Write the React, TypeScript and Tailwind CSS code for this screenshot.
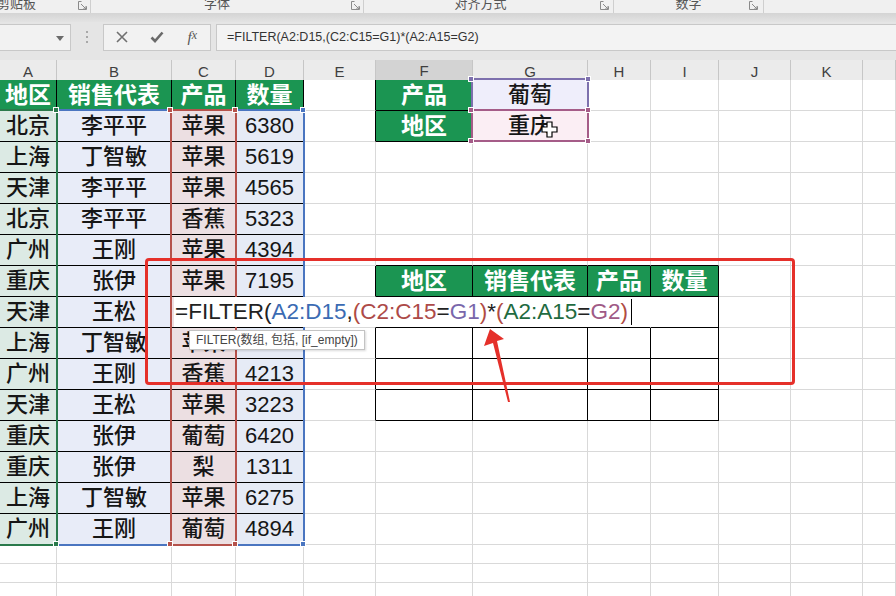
import clsx from "clsx";

const COLS = ["A", "B", "C", "D", "E", "F", "G", "H", "I", "J", "K", ""];
const GRID_COLS = "grid-cols-[57px_115px_64px_68px_72px_97px_115px_63px_68px_72px_72px_33px]";

const data = [
  ["地区", "销售代表", "产品", "数量"],
  ["北京", "李平平", "苹果", "6380"],
  ["上海", "丁智敏", "苹果", "5619"],
  ["天津", "李平平", "苹果", "4565"],
  ["北京", "李平平", "香蕉", "5323"],
  ["广州", "王刚", "苹果", "4394"],
  ["重庆", "张伊", "苹果", "7195"],
  ["天津", "王松", "苹果", "5962"],
  ["上海", "丁智敏", "苹果", "2427"],
  ["广州", "王刚", "香蕉", "4213"],
  ["天津", "王松", "苹果", "3223"],
  ["重庆", "张伊", "葡萄", "6420"],
  ["重庆", "张伊", "梨", "1311"],
  ["上海", "丁智敏", "苹果", "6275"],
  ["广州", "王刚", "葡萄", "4894"],
];

const outHead = ["地区", "销售代表", "产品", "数量"];

const TONES = {
  head: "bg-[#1b9552] text-white font-bold text-[23px]",
  a: "bg-[#dceae4] text-[#161616] font-medium text-[22px]",
  b: "bg-[#e8ecf8] text-[#161616] font-medium text-[22px]",
  c: "bg-[#ecdfe2] text-[#161616] font-medium text-[22px]",
  d: "bg-[#e6ebf6] text-[#161616] text-[22px]",
  g1: "bg-[#efeefb] text-[#161616] font-medium text-[22px]",
  g2: "bg-[#fbeef4] text-[#161616] font-medium text-[22px]",
  plain: "bg-white",
};

type Tone = keyof typeof TONES;

function cellFor(r: number, c: number) {
  let text = "";
  let tone: Tone = "plain";
  let rb = false;
  let bb = false;
  let noRight = false;

  if (r < 15 && c < 4) {
    text = data[r][c];
    tone = r === 0 ? "head" : (["a", "b", "c", "d"] as const)[c];
    rb = bb = true;
  }
  if (r < 2 && c === 5) {
    text = r === 0 ? "产品" : "地区";
    tone = "head";
    rb = bb = true;
  }
  if (r < 2 && c === 6) {
    text = r === 0 ? "葡萄" : "重庆";
    tone = r === 0 ? "g1" : "g2";
    rb = bb = true;
  }
  if (r < 2 && c === 4) rb = true;
  if (r === 6 && c >= 5 && c <= 8) {
    text = outHead[c - 5];
    tone = "head";
    rb = bb = true;
  }
  if (r >= 7 && r <= 10 && c >= 5 && c <= 8) rb = bb = true;
  if (r >= 6 && r <= 10 && c === 4) rb = true;
  if (r === 5 && c >= 5 && c <= 8) bb = true;
  if (r === 7 && c === 7) noRight = true;

  return { text, tone, rb, bb, noRight };
}

function Ribbon() {
  return (
    <div className="flex h-[13px] overflow-hidden bg-[#f0f0f0] text-[13px] text-[#555]">
      <div className="relative flex w-[91px] border-r border-[#cfcfcf]">
        <span className="-ml-[3px] -mt-[6px]">剪贴板</span>
        <Launcher className="absolute right-[3px] top-[1px]" />
      </div>
      <div className="relative flex w-[273px] justify-center border-r border-[#cfcfcf]">
        <span className="-ml-[20px] -mt-[6px]">字体</span>
        <Launcher className="absolute right-[3px] top-[1px]" />
      </div>
      <div className="relative flex w-[250px] justify-center border-r border-[#cfcfcf]">
        <span className="-ml-[16px] -mt-[6px]">对齐方式</span>
        <Launcher className="absolute right-[4px] top-[1px]" />
      </div>
      <div className="relative flex w-[150px] justify-center border-r border-[#cfcfcf]">
        <span className="-mt-[6px]">数字</span>
        <Launcher className="absolute right-[5px] top-[1px]" />
      </div>
    </div>
  );
}

function Launcher({ className }: { className?: string }) {
  return (
    <svg className={className} width="9" height="9" viewBox="0 0 9 9" fill="none" stroke="#8a8a8a" strokeWidth="1">
      <path d="M0.5 0.5h3M0.5 0.5v8h8v-3" />
      <path d="M3 3l5 5M8 5v3h-3" />
    </svg>
  );
}

function FormulaBar() {
  return (
    <div className="bg-[#e5e5e5]">
      <div className="h-[9px] bg-gradient-to-b from-[#d4d4d4] to-[#e3e3e3]" />
      <div className="flex h-[30px] items-center">
        <div className="relative h-[27px] w-[71px] border border-l-0 border-[#c8c8c8] bg-[#f2f2f2]">
          <svg className="absolute right-[6px] top-[11px]" width="8" height="5" viewBox="0 0 8 5">
            <path d="M0 0h8L4 5z" fill="#6b6b6b" />
          </svg>
        </div>
        <div className="flex w-[32px] flex-col items-center gap-[3px]">
          <span className="h-[2px] w-[2px] bg-[#a8a8a8]" />
          <span className="h-[2px] w-[2px] bg-[#a8a8a8]" />
          <span className="h-[2px] w-[2px] bg-[#a8a8a8]" />
        </div>
        <div className="flex h-[27px] w-[108px] items-center border border-[#c8c8c8] bg-[#f2f2f2]">
          <div className="flex w-[36px] justify-center">
            <svg width="12" height="12" viewBox="0 0 12 12" stroke="#707070" strokeWidth="1.6">
              <path d="M1 1l10 10M11 1L1 11" />
            </svg>
          </div>
          <div className="flex w-[36px] justify-center">
            <svg width="14" height="12" viewBox="0 0 14 12" fill="none" stroke="#6a6a6a" strokeWidth="2.6">
              <path d="M1.5 6.5l3.5 3.5L12.5 1.5" />
            </svg>
          </div>
          <div className="flex w-[36px] justify-center font-['Liberation_Serif',serif] text-[15px] italic text-[#555]">
            f<span className="text-[12px]">x</span>
          </div>
        </div>
        <div className="ml-[5px] flex h-[27px] flex-1 items-center border border-r-0 border-[#c8c8c8] bg-[#f3f3f3] pl-[10px] text-[12.5px] text-[#333]">
          =FILTER(A2:D15,(C2:C15=G1)*(A2:A15=G2)
        </div>
      </div>
      <div className="h-[8px]" />
    </div>
  );
}

function ColumnHeaders() {
  return (
    <div className={clsx("grid h-[20px] bg-[#ebebeb]", GRID_COLS)}>
      {COLS.map((c, i) => (
        <div
          key={i}
          className={clsx(
            "flex items-center justify-center border-r border-[#c6c6c6] text-[15px] text-[#3f3f3f]",
            c === "F" ? "border-b-2 border-b-[#217346] bg-[#d3d3d3]" : "border-b border-b-[#c6c6c6]"
          )}
        >
          {c}
        </div>
      ))}
    </div>
  );
}

function Handle({ className }: { className: string }) {
  return <div className={clsx("absolute h-[6px] w-[6px] border border-white", className)} />;
}

function FormulaEditor() {
  const paren = "text-[#b04b43]";
  return (
    <div className="absolute left-[174px] top-[217px] z-20 flex h-[30px] w-[544px] items-center bg-white text-[22.5px] leading-none text-[#222]">
      <span className="pl-[1px]">=FILTER(</span>
      <span className="text-[#3b6bb3]">A2:D15</span>
      <span>,</span>
      <span className={paren}>(</span>
      <span className="text-[#ad4a48]">C2:C15</span>
      <span>=</span>
      <span className="text-[#7967ab]">G1</span>
      <span className={paren}>)</span>
      <span>*</span>
      <span className={paren}>(</span>
      <span className="text-[#1f6b41]">A2:A15</span>
      <span>=</span>
      <span className="text-[#9f5a86]">G2</span>
      <span className={paren}>)</span>
      <span className="ml-[3px] h-[26px] w-[1px] bg-black" />
    </div>
  );
}

function Sheet() {
  const rows = Array.from({ length: 18 }, (_, r) => r);
  return (
    <div className={clsx("relative grid grid-rows-[repeat(15,31px)_repeat(3,19px)]", GRID_COLS)}>
      {rows.map((r) =>
        COLS.map((_, c) => {
          const cell = cellFor(r, c);
          return (
            <div
              key={`${r}-${c}`}
              className={clsx(
                "flex items-center justify-center overflow-hidden whitespace-nowrap border-r border-b leading-none",
                cell.noRight ? "border-r-transparent" : cell.rb ? "border-r-black" : "border-r-[#d9d9d9]",
                cell.bb ? "border-b-black" : "border-b-[#d9d9d9]",
                TONES[cell.tone]
              )}
            >
              {cell.text}
            </div>
          );
        })
      )}

      {/* range highlights */}
      <div className="absolute left-[-3px] top-[29px] z-10 h-[437px] w-[308px] border-2 border-[#4a75c0]" />
      <div className="absolute left-[-3px] top-[29px] z-10 h-[437px] w-[61px] border-2 border-[#2a7a4b]" />
      <div className="absolute left-[170px] top-[29px] z-10 h-[437px] w-[67px] border-2 border-[#b5524b]" />
      <div className="absolute left-[471px] top-[-2px] z-10 h-[33px] w-[118px] border-2 border-[#7d70ad]" />
      <div className="absolute left-[471px] top-[29px] z-10 h-[33px] w-[118px] border-2 border-[#a55c88]" />

      <Handle className="left-[53px] top-[27px] z-10 bg-[#2a7a4b]" />
      <Handle className="left-[53px] top-[461px] z-10 bg-[#2a7a4b]" />
      <Handle className="left-[167px] top-[27px] z-10 bg-[#b5524b]" />
      <Handle className="left-[232px] top-[27px] z-10 bg-[#b5524b]" />
      <Handle className="left-[167px] top-[461px] z-10 bg-[#b5524b]" />
      <Handle className="left-[232px] top-[461px] z-10 bg-[#b5524b]" />
      <Handle className="left-[300px] top-[27px] z-10 bg-[#4a75c0]" />
      <Handle className="left-[300px] top-[461px] z-10 bg-[#4a75c0]" />
      <Handle className="left-[468px] top-[-4px] z-10 bg-[#7d70ad]" />
      <Handle className="left-[585px] top-[-4px] z-10 bg-[#7d70ad]" />
      <Handle className="left-[468px] top-[27px] z-10 bg-[#a55c88]" />
      <Handle className="left-[585px] top-[27px] z-10 bg-[#a55c88]" />
      <Handle className="left-[468px] top-[58px] z-10 bg-[#a55c88]" />
      <Handle className="left-[585px] top-[58px] z-10 bg-[#a55c88]" />

      <FormulaEditor />

      {/* function hint */}
      <div className="absolute left-[189px] top-[250px] z-30 flex h-[20px] w-[176px] items-center border border-[#c3c3c3] bg-white pl-[6px] text-[12px] leading-none text-[#444] shadow-[1px_1px_2px_rgba(0,0,0,0.15)]">
        FILTER(数组, 包括, [if_empty])
      </div>

      {/* annotation */}
      <div className="absolute left-[145px] top-[178px] z-40 h-[127px] w-[650px] rounded-[4px] border-[3px] border-[#e5302a]" />
      <svg className="absolute left-[475px] top-[240px] z-50" width="45" height="90" viewBox="0 0 45 90">
        <polygon points="15,9 29,19 22,21 35,82 33,82 18,23 9,26" fill="#e5302a" />
      </svg>

      {/* mouse pointer */}
      <svg className="absolute left-[541px] top-[41px] z-50" width="17" height="17" viewBox="0 0 17 17">
        <path d="M6 1h5v5h5v5h-5v5H6v-5H1V6h5z" fill="white" stroke="black" strokeWidth="1.2" />
      </svg>
    </div>
  );
}

export default function App() {
  return (
    <div className="relative h-[596px] w-[896px] overflow-hidden bg-white font-['Liberation_Sans','Noto_Sans_CJK_SC',sans-serif]">
      <Ribbon />
      <FormulaBar />
      <ColumnHeaders />
      <Sheet />
    </div>
  );
}
